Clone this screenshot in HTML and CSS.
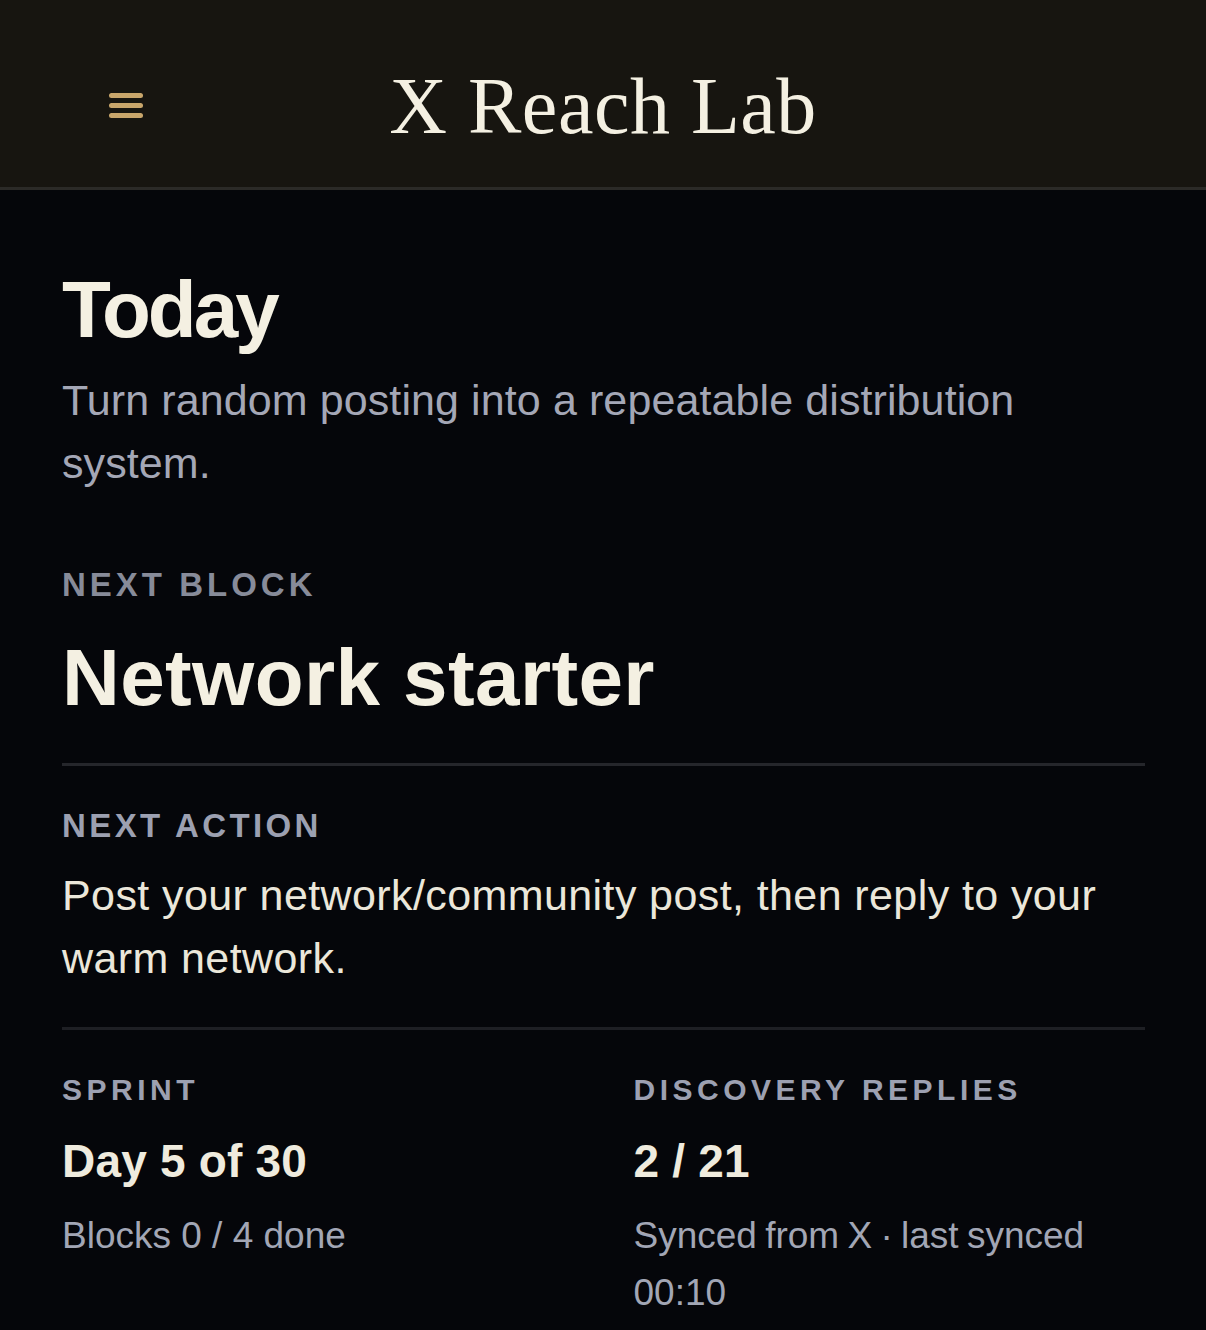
FILE: index.html
```html
<!DOCTYPE html>
<html lang="en">
<head>
<meta charset="utf-8">
<title>X Reach Lab</title>
<link rel="stylesheet" href="styles.css">
</head>
<body>
<header class="topbar">
  <div class="topbar-left">
    <button class="menu" aria-label="Menu"><span></span><span></span><span></span></button>
  </div>
  <h1 class="brand">X Reach Lab</h1>
  <div class="topbar-right"></div>
</header>
<main class="page">
  <h2 class="page-title">Today</h2>
  <p class="page-sub">Turn random posting into a repeatable distribution system.</p>

  <div class="label label-dim block-label">NEXT BLOCK</div>
  <div class="block-name">Network starter</div>

  <hr class="rule rule-top">

  <div class="label action-label">NEXT ACTION</div>
  <p class="action-text">Post your network/community post, then reply to your warm network.</p>

  <hr class="rule rule-bottom">

  <section class="stats">
    <div class="stat">
      <div class="label label-sm">SPRINT</div>
      <div class="stat-value">Day 5 of 30</div>
      <div class="stat-note">Blocks 0 / 4 done</div>
    </div>
    <div class="stat">
      <div class="label label-sm">DISCOVERY REPLIES</div>
      <div class="stat-value">2 / 21</div>
      <div class="stat-note stat-note-tight">Synced from X · last synced 00:10</div>
    </div>
  </section>
</main>
</body>
</html>
```

FILE: styles.css
```css
* { box-sizing: border-box; }

html, body {
  margin: 0;
  padding: 0;
  background: #05060a;
}

body {
  font-family: "Liberation Sans", Arial, sans-serif;
  color: #efebde;
  min-height: 1330px;
}

.topbar {
  height: 190px;
  padding-top: 24px;
  background: #171510;
  border-bottom: 3px solid #2b2a27;
  display: grid;
  grid-template-columns: 1fr auto 1fr;
  align-items: center;
}

.topbar-left {
  padding-left: 109px;
  display: flex;
  align-items: center;
}

.menu {
  width: 34px;
  padding: 0;
  margin: 0;
  border: 0;
  background: transparent;
  display: flex;
  flex-direction: column;
  gap: 5px;
  cursor: pointer;
}

.menu span {
  display: block;
  height: 5px;
  width: 34px;
  border-radius: 3px;
  background: #c9a66b;
}

.brand {
  margin: 0;
  font-family: "Liberation Serif", "Times New Roman", serif;
  font-weight: 400;
  font-size: 80px;
  line-height: 1;
  color: #f4f0e2;
  letter-spacing: 0.5px;
}

.page {
  padding: 76px 61px 0 62px;
}

.page-title {
  margin: 0;
  font-size: 80px;
  line-height: 88px;
  font-weight: 700;
  letter-spacing: -3px;
  color: #f4f0e2;
}

.page-sub {
  margin: 15px 0 0;
  font-size: 43px;
  line-height: 63px;
  letter-spacing: 0.1px;
  color: #a4a7b6;
}

.label {
  font-size: 33px;
  line-height: 40px;
  font-weight: 700;
  letter-spacing: 3.4px;
  color: #9ca0b1;
}

.label-dim {
  color: #878b99;
  letter-spacing: 4px;
}

.label-sm {
  font-size: 30px;
  letter-spacing: 4.5px;
}

.block-label {
  margin-top: 70px;
}

.block-name {
  margin-top: 29px;
  font-size: 80px;
  line-height: 88px;
  font-weight: 700;
  letter-spacing: 0.4px;
  color: #f4f0e2;
}

.rule {
  margin: 0;
  border: 0;
  height: 3px;
  background: #25262b;
}

.rule-top { margin-top: 41px; }

.action-label { margin-top: 40px; }

.action-text {
  margin: 18px 0 0;
  font-size: 43px;
  line-height: 63px;
  letter-spacing: 0.4px;
  color: #ebe7da;
}

.rule-bottom { margin-top: 37px; background: #1e1f24; }

.stats {
  margin-top: 40px;
  display: grid;
  grid-template-columns: 1fr 1fr;
  column-gap: 60px;
}

.stat-value {
  margin-top: 23px;
  font-size: 46px;
  line-height: 56px;
  font-weight: 700;
  letter-spacing: 0.2px;
  color: #efebde;
}

.stat-note {
  margin-top: 18px;
  font-size: 37px;
  line-height: 57px;
  color: #a2a6b5;
}

.stat-note-tight {
  word-spacing: -2px;
}
```
